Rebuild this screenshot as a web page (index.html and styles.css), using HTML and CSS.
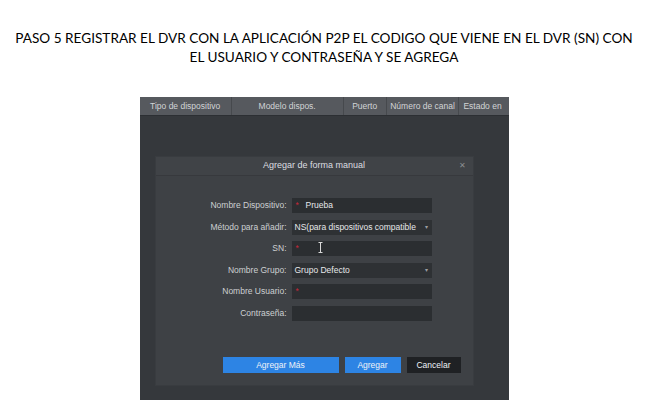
FILE: index.html
```html
<!DOCTYPE html>
<html>
<head>
<meta charset="UTF-8">
<title>Paso 5</title>
<link rel="stylesheet" href="styles.css">
</head>
<body>
	<h1 class="titulo">PASO 5 REGISTRAR EL DVR CON LA APLICACIÓN P2P EL CODIGO QUE VIENE EN EL DVR (SN) CON<br>EL USUARIO Y CONTRASEÑA Y SE AGREGA</h1>
	<div class="captura">
		<div class="cabecera">
			<span class="col c1">Tipo de dispositivo</span>
			<span class="col c2">Modelo dispos.</span>
			<span class="col c3">Puerto</span>
			<span class="col c4">Número de canal</span>
			<span class="col c5">Estado en</span>
		</div>
		<div class="dialogo">
			<div class="dlg-titulo">
				<span>Agregar de forma manual</span>
				<span class="cerrar">✕</span>
			</div>
			<div class="form">
				<label>Nombre Dispositivo:</label>
				<div class="campo"><i class="req">*</i>Prueba</div>
				<label>Método para añadir:</label>
				<div class="campo select">NS(para dispositivos compatible<b class="flecha">▾</b></div>
				<label>SN:</label>
				<div class="campo"><i class="req">*</i><svg class="cursor" width="5" height="11" viewBox="0 0 5 11"><path d="M0.5 0.5h4M2.5 0.5v10M0.5 10.5h4" stroke="#d8d8d8" stroke-width="1" fill="none"/></svg></div>
				<label>Nombre Grupo:</label>
				<div class="campo select">Grupo Defecto<b class="flecha">▾</b></div>
				<label>Nombre Usuario:</label>
				<div class="campo"><i class="req">*</i></div>
				<label>Contraseña:</label>
				<div class="campo"></div>
			</div>
			<div class="botones">
				<span class="btn azul mas">Agregar Más</span>
				<span class="btn azul">Agregar</span>
				<span class="btn negro">Cancelar</span>
			</div>
		</div>
	</div>
</body>
</html>
```

FILE: styles.css
```css
body{
	margin: 0;
	background: #fff;
}
.titulo{
	font-family: Lato, "Liberation Sans", sans-serif;
	font-weight: normal;
	font-size: 13.6px;
	line-height: 19px;
	text-align: center;
	color: #000;
	margin: 0;
	padding: 29px 0 0 0;
	height: 68px;
}
.captura{
	width: 369px;
	height: 303px;
	margin: 0 auto;
	background: #35383c;
	font-family: "Liberation Sans", Arial, sans-serif;
	font-size: 8.5px;
	color: #d0d2d4;
	overflow: hidden;
}
.cabecera{
	display: flex;
	height: 18px;
	background: #56595e;
	line-height: 18px;
	color: #d2d4d6;
	border-bottom: 1px solid #2c2f33;
}
.col{
	border-right: 1px solid #46494d;
	text-align: center;
	white-space: nowrap;
}
.c1{ width: 93px; }
.c2{ width: 113px; }
.c3{ width: 43px; }
.c4{ width: 73px; }
.c5{ width: 46px; border-right: 0; text-align: left; padding-left: 4px; }
.dialogo{
	margin: 41px 0 0 16px;
	width: 317px;
	height: 228px;
	background: #3e4145;
	box-shadow: 0 0 0 1px #393c40;
	display: flex;
	flex-direction: column;
}
.dlg-titulo{
	height: 18px;
	line-height: 17px;
	text-align: center;
	font-size: 9px;
	color: #dcdee0;
	background: #404347;
	border-bottom: 1px solid #37393d;
	position: relative;
}
.cerrar{
	position: absolute;
	right: 7px;
	top: 0;
	font-size: 8px;
	color: #8a8d90;
}
.form{
	display: grid;
	grid-template-columns: 131px 140px;
	column-gap: 5px;
	row-gap: 6.6px;
	margin-top: 22px;
}
.form label{
	text-align: right;
	line-height: 15px;
	color: #cdd0d2;
}
.campo{
	height: 15px;
	line-height: 15px;
	background: #2b2e31;
	color: #e6e8ea;
	padding-left: 4px;
	position: relative;
	white-space: nowrap;
	overflow: hidden;
}
.req{
	font-style: normal;
	color: #c7283a;
	display: inline-block;
	width: 10px;
}
.select{
	padding-left: 3px;
	background: #2e3134;
}
.flecha{
	position: absolute;
	right: 4px;
	top: 0;
	font-weight: normal;
	font-size: 6px;
	color: #9c9fa2;
	background: #2e3134;
	padding-left: 4px;
}
.cursor{
	margin-left: 12px;
	vertical-align: -2px;
}
.botones{
	margin-top: auto;
	margin-bottom: 12px;
	display: flex;
	gap: 6px;
	padding-left: 67px;
}
.btn{
	height: 16px;
	line-height: 16px;
	text-align: center;
	color: #eef2f8;
	width: 56px;
}
.mas{
	width: 116px;
}
.azul{
	background: #2d84e4;
}
.negro{
	background: #1f2124;
	width: 54px;
}
```
